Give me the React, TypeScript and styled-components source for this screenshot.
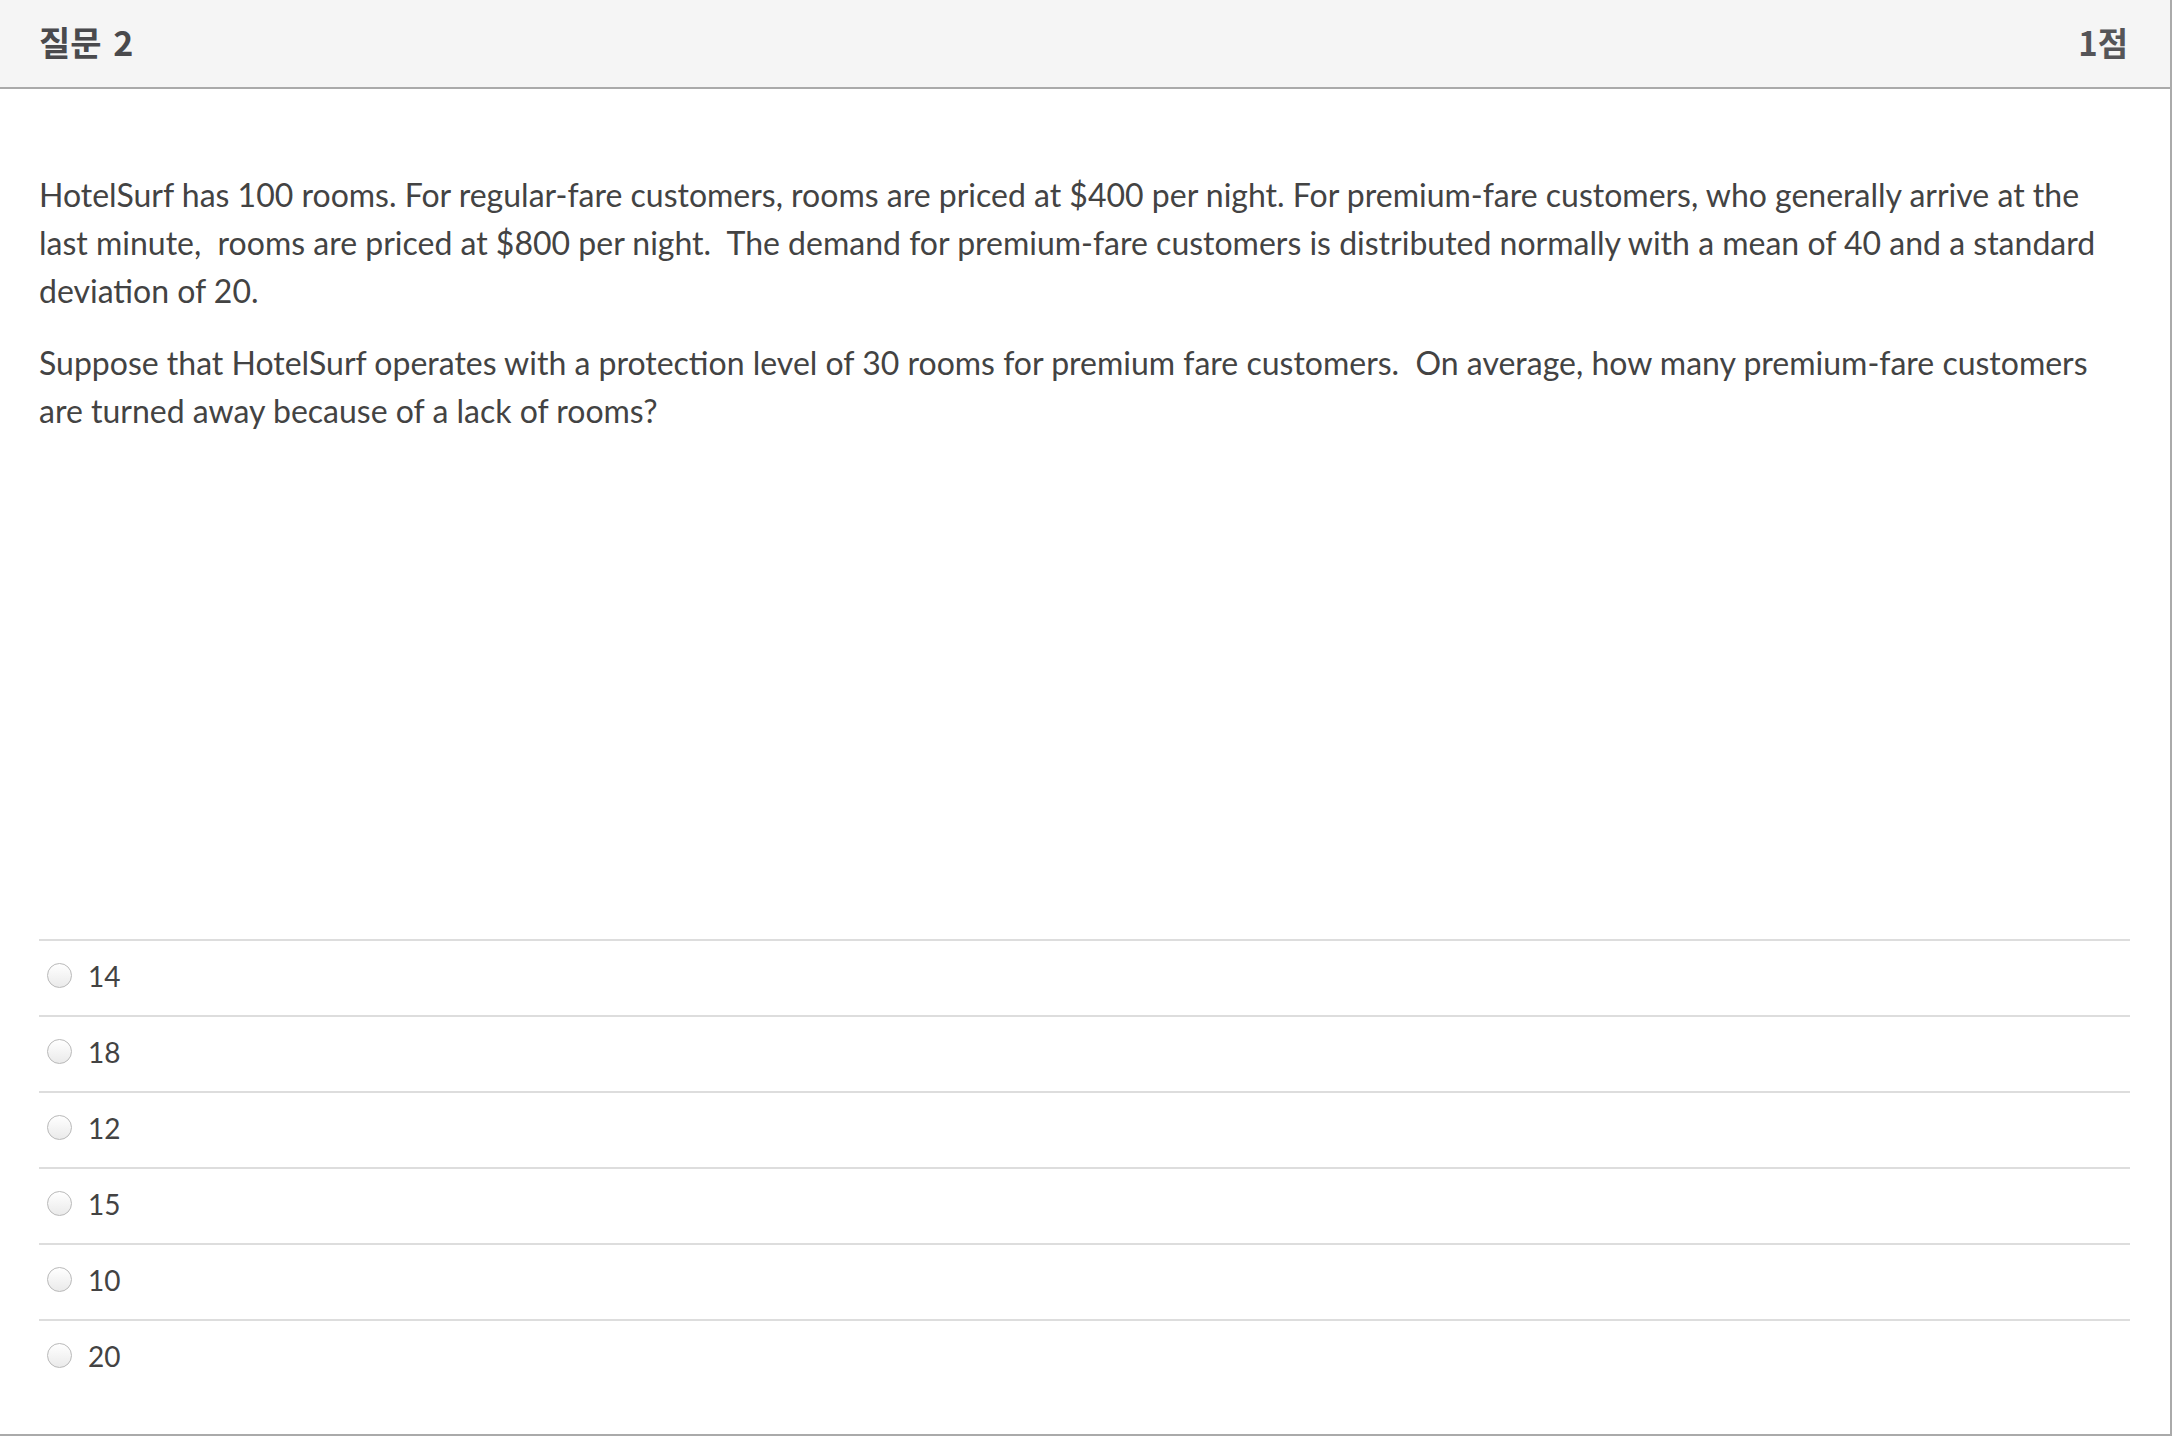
import React from 'react';
import styled, { createGlobalStyle } from 'styled-components';

const GlobalStyle = createGlobalStyle`
    html, body {
        margin: 0;
        padding: 0;
        background: #ffffff;
    }
    body {
        font-family: Lato, 'Noto Sans CJK KR', sans-serif;
        color: #3e3e3e;
    }
`;

const QuestionBox = styled.div`
    width: 2170px;
    border-right: 2px solid #aaaaaa;
    border-bottom: 2px solid #aaaaaa;
    background: #ffffff;
`;

const QuestionHeader = styled.div`
    height: 83px;
    display: flex;
    align-items: center;
    justify-content: space-between;
    padding: 0 42px 4px 39px;
    background: #f5f5f5;
    border-bottom: 2px solid #aaaaaa;
    font-family: 'Noto Sans CJK KR', sans-serif;
    font-weight: bold;
    font-size: 34px;
    color: #4a4a4d;
`;

const QuestionTitle = styled.span`
    word-spacing: 4px;
`;

const QuestionPoints = styled.span`
    font-size: 33px;
    color: #555558;
`;

const QuestionBody = styled.div`
    padding: 82px 40px 39px 39px;
`;

const QuestionText = styled.div`
    min-height: 768px;
    font-size: 32px;
    line-height: 48px;
    color: #434343;

    p {
        margin: 0 0 24px;
    }
`;

const AnswerList = styled.div`
    display: flex;
    flex-direction: column;
`;

const AnswerRow = styled.label`
    height: 76px;
    box-sizing: border-box;
    display: flex;
    align-items: center;
    gap: 16px;
    padding: 0 0 5px 8px;
    border-top: 2px solid #dddddd;
    font-size: 28px;
    color: #434343;
`;

const RadioCircle = styled.span`
    width: 23px;
    height: 23px;
    border-radius: 50%;
    border: 1px solid #b9b9b9;
    background: linear-gradient(#ffffff, #eaeaea);
    flex-shrink: 0;
`;

const answers = ['14', '18', '12', '15', '10', '20'];

const App = () => {
    return (
        <>
            <GlobalStyle />
            <QuestionBox>
                <QuestionHeader>
                    <QuestionTitle>질문 2</QuestionTitle>
                    <QuestionPoints>1점</QuestionPoints>
                </QuestionHeader>
                <QuestionBody>
                    <QuestionText>
                        <p>
                            HotelSurf has 100 rooms. For regular-fare customers, rooms are priced at $400 per night. For
                            premium-fare customers, who generally arrive at the last minute,&nbsp; rooms are priced at $800
                            per night.&nbsp; The demand for premium-fare customers is distributed normally with a mean of 40
                            and a standard deviation of 20.
                        </p>
                        <p>
                            Suppose that HotelSurf operates with a protection level of 30 rooms for premium fare
                            customers.&nbsp; On average, how many premium-fare customers are turned away because of a lack
                            of rooms?
                        </p>
                    </QuestionText>
                    <AnswerList>
                        {answers.map(answer => (
                            <AnswerRow key={answer}>
                                <RadioCircle />
                                <span>{answer}</span>
                            </AnswerRow>
                        ))}
                    </AnswerList>
                </QuestionBody>
            </QuestionBox>
        </>
    );
};

export default App;
